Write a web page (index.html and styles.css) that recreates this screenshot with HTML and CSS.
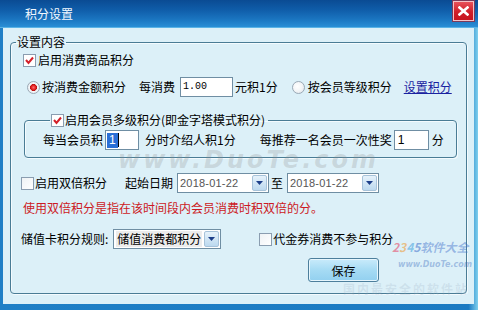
FILE: index.html
```html
<!DOCTYPE html>
<html lang="zh-CN">
<head>
<meta charset="utf-8">
<title>积分设置</title>
<link rel="stylesheet" href="styles.css">
</head>
<body>
<div class="window">
  <div class="titlebar">
    <span class="title">积分设置</span>
    <span class="close"><svg width="11" height="10" viewBox="0 0 11 10"><path d="M1.5 1.5 L9.5 8.5 M9.5 1.5 L1.5 8.5" stroke="#fff" stroke-width="2.6" stroke-linecap="square"/></svg></span>
  </div>
  <div class="client">
    <fieldset class="group main">
      <legend class="legend-main">设置内容</legend>

      <div class="row r1">
        <span class="chk"><svg width="11" height="11" viewBox="0 0 11 11"><path d="M2 5 L4.5 8 L9 2.5" fill="none" stroke="#d3202a" stroke-width="2"/></svg></span>
        <span class="lbl">启用消费商品积分</span>
      </div>

      <div class="row r2">
        <span class="radio on"></span>
        <span class="lbl t1">按消费金额积分</span>
        <span class="lbl t2">每消费</span>
        <span class="input w53"><span class="mono">1.00</span></span>
        <span class="lbl t3">元积1分</span>
        <span class="radio t4"></span>
        <span class="lbl t5">按会员等级积分</span>
        <a class="link">设置积分</a>
      </div>

      <fieldset class="group inner">
        <legend class="legend-inner">
          <span class="chk"><svg width="11" height="11" viewBox="0 0 11 11"><path d="M2 5 L4.5 8 L9 2.5" fill="none" stroke="#d3202a" stroke-width="2"/></svg></span>
          <span class="lbl">启用会员多级积分(即金字塔模式积分)</span>
        </legend>
        <div class="row r3">
          <span class="lbl">每当会员积</span>
          <span class="input w34 i1"><span class="sel">1</span><span class="caret"></span></span>
          <span class="lbl t6">分时介绍人积1分</span>
          <span class="lbl t7">每推荐一名会员一次性奖</span>
          <span class="input w35 i2"><span class="num">1</span></span>
          <span class="lbl t8">分</span>
        </div>
      </fieldset>

      <div class="row r5">
        <span class="chk off"></span>
        <span class="lbl">启用双倍积分</span>
        <span class="lbl t9">起始日期</span>
        <span class="combo date d1"><span class="val">2018-01-22</span><span class="drop"><svg width="7" height="4" viewBox="0 0 7 4"><path d="M0 0 H7 L3.5 4Z" fill="#1d3f8a"/></svg></span></span>
        <span class="lbl t10">至</span>
        <span class="combo date d2"><span class="val">2018-01-22</span><span class="drop"><svg width="7" height="4" viewBox="0 0 7 4"><path d="M0 0 H7 L3.5 4Z" fill="#1d3f8a"/></svg></span></span>
      </div>

      <div class="row r6">
        <span class="warn">使用双倍积分是指在该时间段内会员消费时积双倍的分。</span>
      </div>

      <div class="row r7">
        <span class="lbl">储值卡积分规则:</span>
        <span class="combo rule"><span class="val2">储值消费都积分</span><span class="drop"><svg width="7" height="4" viewBox="0 0 7 4"><path d="M0 0 H7 L3.5 4Z" fill="#1d3f8a"/></svg></span></span>
        <span class="chk off t11"></span>
        <span class="lbl">代金券消费不参与积分</span>
      </div>

      <div class="row r8">
        <button class="btn" type="button">保存</button>
      </div>
    </fieldset>
  </div>
  <div class="wm wm-big">www.DuoTe.com</div>
  <div class="wm wm-logo"><span class="n2">2</span><span class="n3">3</span><span class="n4">4</span><span class="n5">5</span>软件大全</div>
  <div class="wm wm-url">www.DuoTe.com</div>
  <div class="wm wm-slogan">国内最安全的软件站</div>
</div>
</body>
</html>
```

FILE: styles.css
```css
* { box-sizing: border-box; margin: 0; padding: 0; }
html, body { width: 478px; height: 310px; overflow: hidden; }
body {
  font-family: "Noto Sans CJK SC", "Liberation Sans", sans-serif;
  font-size: 12px;
  line-height: 14px;
  color: #000;
  background: #1a7cc4;
}
.window {
  position: relative;
  width: 478px;
  height: 310px;
  display: flex;
  flex-direction: column;
  background: linear-gradient(90deg, #1f7fc6 0, #1b7ac2 98%, #7fd0ee 100%);
}
.titlebar {
  height: 28px;
  flex: none;
  display: flex;
  align-items: center;
  padding: 0 4px 0 25px;
  background: linear-gradient(#0a4b93 0, #0f5ca8 35%, #1a74bf 70%, #2a8fd6 100%);
  border-bottom: 1px solid #5bb4e6;
}
.title { flex: 1; color: #f2f8ff; font-size: 12px; padding-top: 1px; }
.close {
  width: 21px; height: 20px;
  margin-top: -6px;
  display: flex; align-items: center; justify-content: center;
  background: linear-gradient(#e8515a, #cf1f2a 55%, #c8141f);
  border: 1px solid #f3c3c8;
  box-shadow: 0 0 0 1px #7b3a5a;
}
.client {
  flex: 1;
  margin: 0 4px 6px 3px;
  background: #dcf0f8;
  padding: 7px 7px 10px 7px;
  display: flex;
}
.group {
  border: 1px solid #4a7c95;
  border-radius: 4px;
  box-shadow: inset 1px 1px 0 #f4fbfe, 1px 1px 0 #f4fbfe;
}
.main {
  width: 457px;
  padding: 0 0 10px 0;
  display: flex;
  flex-direction: column;
}
.legend-main { margin-left: 5px; padding: 0 1px; line-height: 14px; }
.row { display: flex; align-items: center; white-space: nowrap; }
.lbl { display: block; }

.chk {
  width: 13px; height: 13px; flex: none;
  background: #fff;
  border: 1px solid #8a9db0;
  display: flex; align-items: center; justify-content: center;
}
.chk.off { background: linear-gradient(135deg, #eef2f5, #fff); }

.radio {
  width: 13px; height: 13px; flex: none;
  border-radius: 50%;
  border: 1px solid #9aa9b6;
  background: radial-gradient(circle at 40% 40%, #fff 0, #f3f5f7 50%, #d9e0e6 100%);
}
.radio.on {
  background: radial-gradient(circle at 50% 50%, #ff6a6a 0, #e11d1d 30%, #b50f0f 42%, #f4f6f8 48%, #dfe5ea 100%);
}

.input {
  height: 20px; flex: none;
  background: #fff;
  border: 1px solid #6f8ea3;
  display: flex; align-items: center;
  padding-left: 2px;
}
.w53 { width: 53px; }
.w34 { width: 34px; }
.w35 { width: 35px; }
.mono { font-family: "Liberation Mono", monospace; font-size: 10px; color: #000; }
.num { font-family: "Liberation Sans", sans-serif; font-size: 12px; padding-left: 1px; }
.sel {
  background: #2a6fd6; color: #fff;
  font-family: "Liberation Sans", sans-serif; font-size: 12px;
  height: 15px; line-height: 15px; padding: 0 2px;
}
.caret { width: 1px; height: 14px; background: #000; }

.r1 { margin-top: 1px; height: 20px; padding-left: 12px; }
.r1 .lbl { margin-left: 2px; }

.r2 { margin-top: 7px; height: 20px; padding-left: 16px; }
.t1 { margin-left: 2px; }
.t2 { margin-left: 13px; }
.r2 .input { margin-left: 5px; }
.t3 { margin-left: 2px; }
.t4 { margin-left: 14px; }
.t5 { margin-left: 3px; }
.link { margin-left: 12px; color: #1a22a0; text-decoration: underline; cursor: pointer; }

.inner {
  margin: 16px 0 0 13px;
  width: 433px;
  padding: 3px 0 7px 18px;
}
.legend-inner {
  margin-left: 7px;
  padding: 0 3px 0 1px;
  display: flex; align-items: center;
  line-height: 14px; height: 14px;
}
.legend-inner .lbl { margin-left: 1px; }
.r3 { height: 20px; }
.i1 { margin-left: 2px; padding-left: 1px; }
.t6 { margin-left: 6px; }
.t7 { margin-left: 24px; }
.i2 { margin-left: 2px; }
.t8 { margin-left: 3px; }

.r5 { margin-top: 15px; height: 20px; padding-left: 10px; }
.r5 .chk { margin-right: 1px; }
.t9 { margin-left: 18px; }
.combo {
  height: 20px; flex: none;
  background: #fff;
  border: 1px solid #6f8ea3;
  display: flex; align-items: center;
  padding: 0 1px 0 2px;
}
.date { width: 92px; }
.d1 { margin-left: 4px; }
.t10 { margin-left: 2px; }
.d2 { margin-left: 4px; }
.val {
  flex: 1;
  font-family: "Liberation Sans", sans-serif; font-size: 11px; color: #555;
  letter-spacing: 0.2px;
}
.drop {
  width: 15px; height: 16px; flex: none;
  display: flex; align-items: center; justify-content: center;
  background: linear-gradient(#e6f2fb, #bcd9ef);
  border: 1px solid #a7c3da;
  border-radius: 2px;
}

.r6 { margin-top: 7px; height: 16px; padding-left: 12px; }
.warn { color: #cc1a24; }

.r7 { margin-top: 13px; height: 20px; padding-left: 10px; }
.rule { width: 108px; margin-left: 5px; padding-left: 2px; background: #fff; }
.val2 { flex: 1; background: #ececec; padding-left: 1px; line-height: 16px; }
.rule .drop { margin-left: 2px; }
.t11 { margin-left: 38px; margin-right: 1px; }

.r8 { margin-top: 9px; padding-left: 297px; }
.btn {
  width: 71px; height: 24px;
  font-family: "Noto Sans CJK SC", sans-serif; font-size: 12px; color: #000;
  background: linear-gradient(#c9ebfb, #a6dbf4 50%, #92d0ef);
  border: 1px solid #4d7f9c;
  border-radius: 3px;
  box-shadow: inset 0 0 0 1px #e6f6fd;
}

.wm { position: absolute; pointer-events: none; white-space: nowrap; }
.wm-big {
  left: 118px; top: 152px;
  font-family: "DejaVu Sans", sans-serif; font-weight: bold; font-style: italic;
  font-size: 24px; line-height: 16px; letter-spacing: 3px;
  color: rgba(140, 140, 140, 0.26);
}
.wm-logo {
  left: 392px; top: 240px;
  font-family: "Noto Sans CJK SC", sans-serif; font-weight: bold; font-style: italic;
  font-size: 12px; color: rgba(60, 110, 200, 0.45);
}
.wm-logo .n2 { color: rgba(230, 60, 90, 0.55); }
.wm-logo .n3 { color: rgba(240, 150, 40, 0.55); }
.wm-logo .n4 { color: rgba(60, 160, 220, 0.55); }
.wm-logo .n5 { color: rgba(60, 110, 200, 0.55); }
.wm-url {
  left: 398px; top: 258px;
  font-family: "DejaVu Sans", sans-serif; font-weight: bold; font-style: italic;
  font-size: 8px; color: rgba(60, 110, 190, 0.4);
}
.wm-slogan {
  left: 343px; top: 282px;
  font-family: "Noto Sans CJK SC", sans-serif; font-weight: bold;
  font-size: 12px; letter-spacing: 2px; color: rgba(150, 170, 190, 0.22);
}
```
